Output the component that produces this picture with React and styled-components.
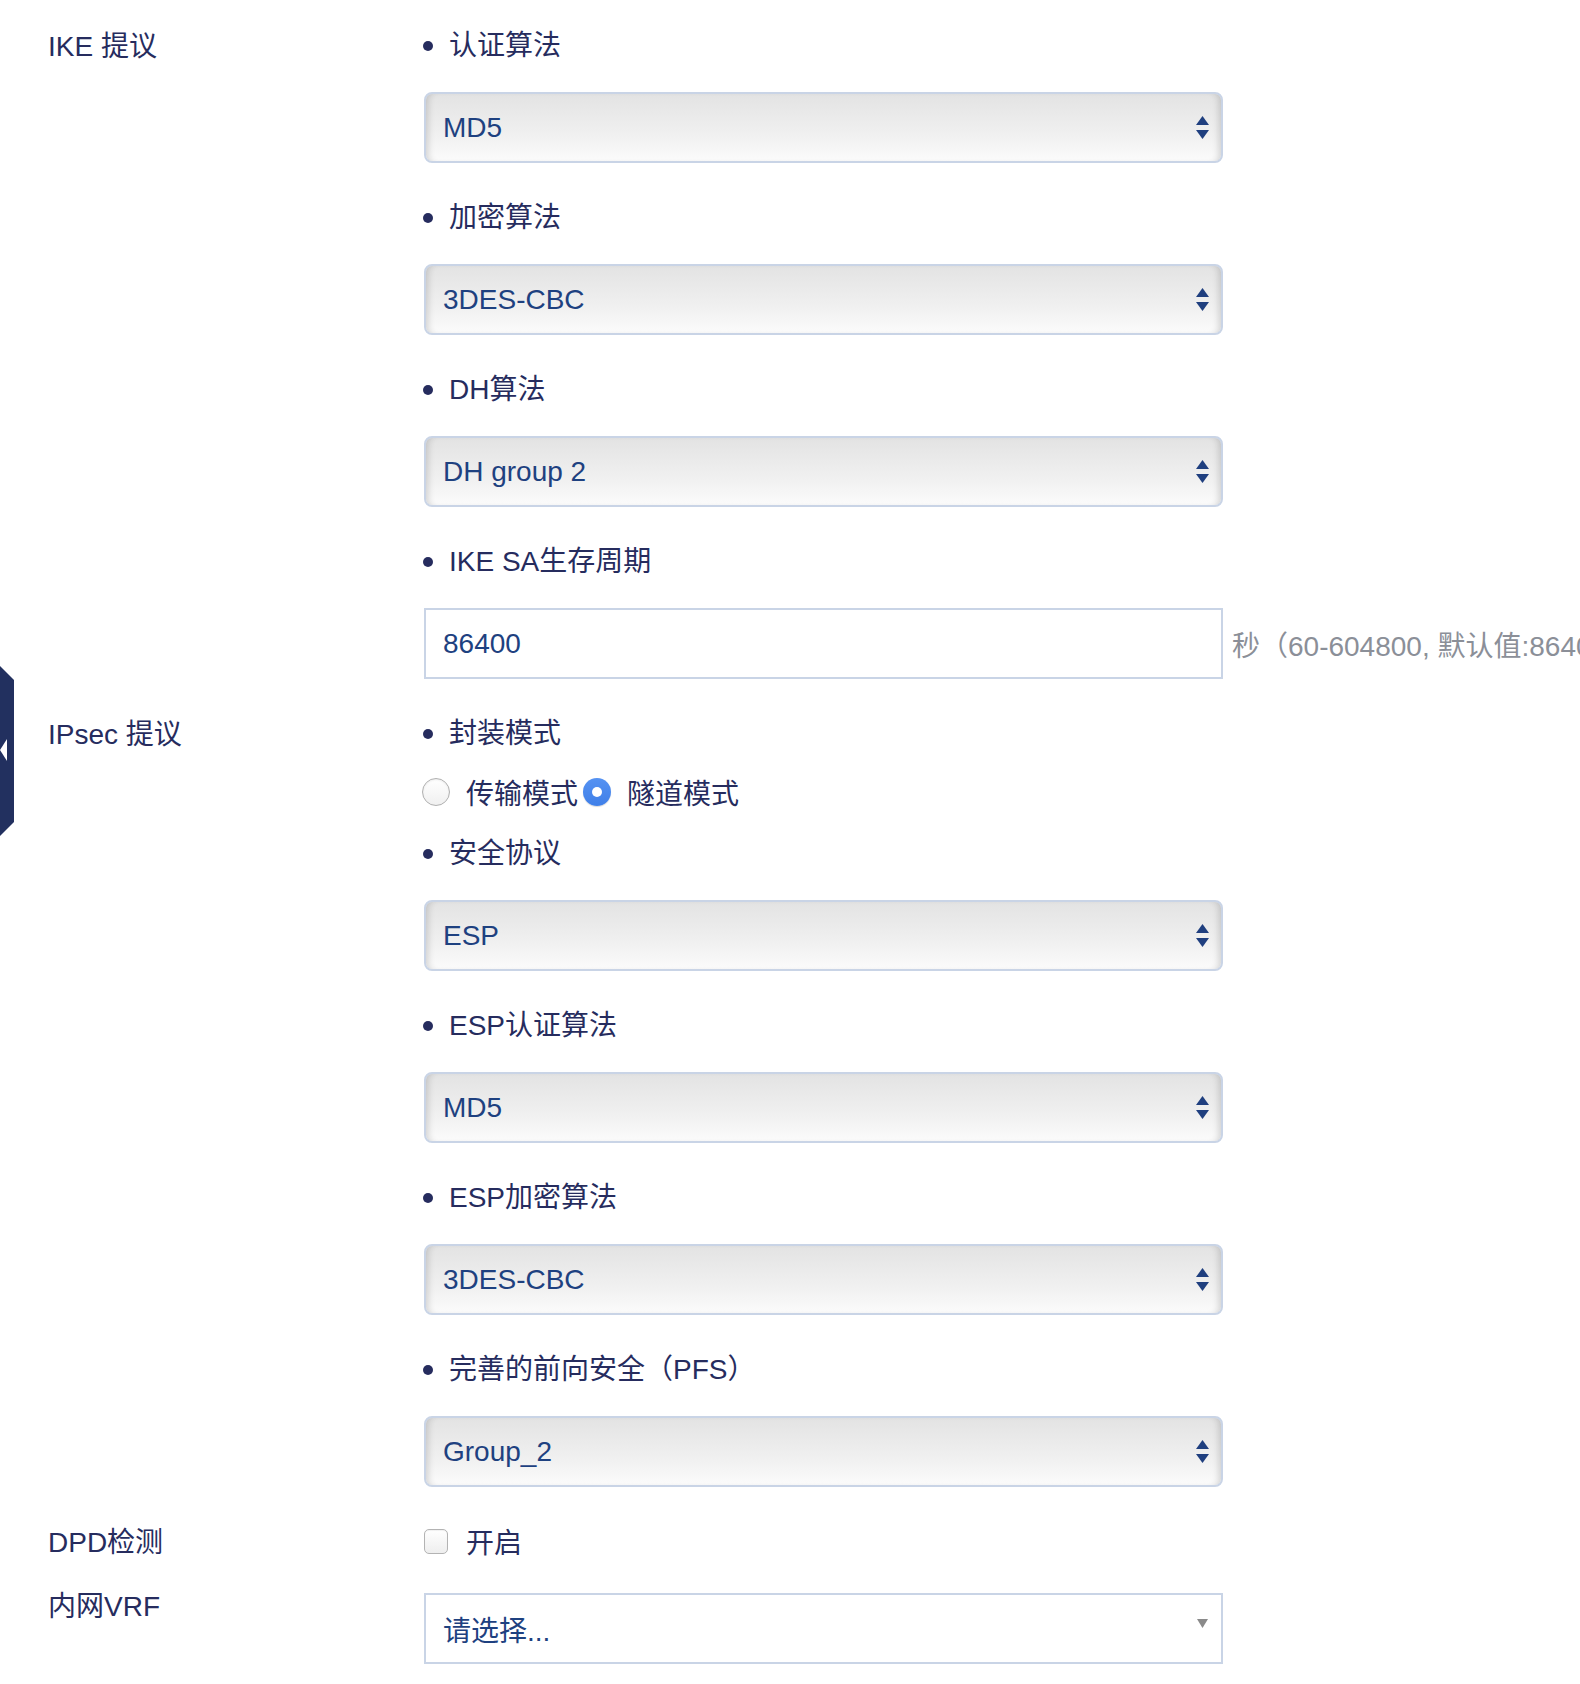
import React from "react";
import styled, { createGlobalStyle } from "styled-components";

const GlobalStyle = createGlobalStyle`
  html, body {
    margin: 0;
    padding: 0;
    background: #ffffff;
    overflow-x: hidden;
  }
  body {
    font-family: "Liberation Sans", "Noto Sans CJK SC", sans-serif;
    font-size: 28px;
    color: #262c5e;
  }
`;

const ikeFields = [
  { label: "认证算法", value: "MD5" },
  { label: "加密算法", value: "3DES-CBC" },
  { label: "DH算法", value: "DH group 2" },
];

const ipsecFields = [
  { label: "安全协议", value: "ESP" },
  { label: "ESP认证算法", value: "MD5" },
  { label: "ESP加密算法", value: "3DES-CBC" },
  { label: "完善的前向安全（PFS）", value: "Group_2" },
];

export default function App() {
  return (
    <>
      <GlobalStyle />
      <SidebarToggle aria-label="收起">
        <svg width="14" height="170" viewBox="0 0 14 170">
          <polygon points="0,0 14,14 14,156 0,170" fill="#22305f" />
          <polygon points="7,73 7,95 0,84" fill="#ffffff" />
        </svg>
      </SidebarToggle>
      <Page>
        <FormRow>
          <RowLabel>IKE 提议</RowLabel>
          <RowContent>
            {ikeFields.map((f) => (
              <Field key={f.label}>
                <SubLabel>{f.label}</SubLabel>
                <SelectBox value={f.value} />
              </Field>
            ))}
            <Field>
              <SubLabel>IKE SA生存周期</SubLabel>
              <InputRow>
                <TextInput defaultValue="86400" />
                <Hint>秒（60-604800, 默认值:86400）</Hint>
              </InputRow>
            </Field>
          </RowContent>
        </FormRow>

        <FormRow>
          <RowLabel>IPsec 提议</RowLabel>
          <RowContent>
            <SubLabel $tight>封装模式</SubLabel>
            <RadioGroup>
              <RadioOption>
                <RadioDot />
                传输模式
              </RadioOption>
              <RadioOption>
                <RadioDot $checked />
                隧道模式
              </RadioOption>
            </RadioGroup>
            {ipsecFields.map((f) => (
              <Field key={f.label}>
                <SubLabel>{f.label}</SubLabel>
                <SelectBox value={f.value} />
              </Field>
            ))}
          </RowContent>
        </FormRow>

        <FormRow>
          <RowLabel>DPD检测</RowLabel>
          <RowContent>
            <CheckOption>
              <CheckBox />
              开启
            </CheckOption>
          </RowContent>
        </FormRow>

        <FormRow $last>
          <RowLabel $compact>内网VRF</RowLabel>
          <RowContent>
            <PlainSelect>
              请选择...
              <svg width="11" height="9" viewBox="0 0 11 9">
                <polygon points="0,0 11,0 5.5,9" fill="#8a8a8a" />
              </svg>
            </PlainSelect>
          </RowContent>
        </FormRow>
      </Page>
    </>
  );
}

function SelectBox({ value }) {
  return (
    <FancySelect>
      <span>{value}</span>
      <svg width="13" height="23" viewBox="0 0 13 23">
        <polygon points="6.5,0 13,9 0,9" fill="#1f3f7f" />
        <polygon points="0,14 13,14 6.5,23" fill="#1f3f7f" />
      </svg>
    </FancySelect>
  );
}

const Page = styled.div`
  padding: 24px 0 20px 48px;
`;

const FormRow = styled.div`
  display: grid;
  grid-template-columns: 376px 799px;
  margin-bottom: ${(p) => (p.$last ? "0" : "33px")};
  &:nth-child(-n + 2) {
    margin-bottom: 0;
  }
`;

const RowLabel = styled.div`
  box-sizing: border-box;
  height: ${(p) => (p.$compact ? "28px" : "40px")};
  line-height: ${(p) => (p.$compact ? "28px" : "40px")};
  padding-top: ${(p) => (p.$compact ? "0" : "3px")};
  color: #262c5e;
  white-space: nowrap;
`;

const RowContent = styled.div`
  display: flex;
  flex-direction: column;
`;

const Field = styled.div`
  display: flex;
  flex-direction: column;
  margin-bottom: 33px;
`;

const SubLabel = styled.div`
  display: flex;
  align-items: center;
  line-height: 40px;
  padding-top: 2px;
  margin-bottom: ${(p) => (p.$tight ? "18px" : "26px")};
  color: #262c5e;
  white-space: nowrap;
  &::before {
    content: "";
    width: 10px;
    height: 10px;
    border-radius: 50%;
    background: #262c5e;
    margin: 0 16px 0 -1px;
    flex-shrink: 0;
  }
`;

const FancySelect = styled.div`
  box-sizing: border-box;
  height: 71px;
  width: 799px;
  display: flex;
  align-items: center;
  justify-content: space-between;
  padding: 0 12px 0 17px;
  border: 2px solid #c9d4e6;
  border-radius: 8px;
  background: linear-gradient(#e3e3e3, #f0f0f0 60%, #fbfbfb);
  box-shadow: inset 7px 0 7px -5px rgba(0, 0, 0, 0.16),
    inset -7px 0 7px -5px rgba(0, 0, 0, 0.16);
  color: #1e4180;
`;

const InputRow = styled.div`
  display: flex;
  align-items: center;
  width: 799px;
`;

const TextInput = styled.input`
  box-sizing: border-box;
  flex-shrink: 0;
  width: 799px;
  height: 71px;
  padding: 0 17px;
  border: 2px solid #c9d4e6;
  border-radius: 0;
  outline: none;
  font: inherit;
  color: #1e4180;
  background: #ffffff;
`;

const Hint = styled.span`
  margin-left: 9px;
  white-space: nowrap;
  color: #8b8f98;
`;

const RadioGroup = styled.div`
  display: flex;
  align-items: center;
  height: 40px;
  margin-bottom: 20px;
`;

const RadioOption = styled.label`
  display: flex;
  align-items: center;
  margin-right: 7px;
  color: #262c5e;
  white-space: nowrap;
`;

const RadioDot = styled.span`
  box-sizing: border-box;
  width: 28px;
  height: 28px;
  border-radius: 50%;
  margin: 0 16px 0 -2px;
  display: flex;
  align-items: center;
  justify-content: center;
  border: ${(p) => (p.$checked ? "none" : "1px solid #b0b0b0")};
  background: ${(p) =>
    p.$checked ? "linear-gradient(#5592f2, #3f7fe8)" : "linear-gradient(#ffffff, #f0f0f0)"};
  box-shadow: ${(p) =>
    p.$checked ? "0 1px 1px rgba(0,0,0,0.15)" : "inset 0 1px 2px rgba(0,0,0,0.08)"};
  &::after {
    content: "";
    display: ${(p) => (p.$checked ? "block" : "none")};
    width: 10px;
    height: 10px;
    border-radius: 50%;
    background: #ffffff;
  }
`;

const CheckOption = styled.label`
  box-sizing: border-box;
  display: flex;
  align-items: center;
  height: 40px;
  padding-top: 2px;
  color: #262c5e;
`;

const CheckBox = styled.span`
  box-sizing: border-box;
  width: 24px;
  height: 25px;
  border: 1px solid #b3b3b3;
  border-radius: 5px;
  background: linear-gradient(#ffffff, #eeeeee);
  box-shadow: inset 0 1px 1px rgba(0, 0, 0, 0.06);
  margin-right: 18px;
`;

const PlainSelect = styled.div`
  box-sizing: border-box;
  width: 799px;
  height: 71px;
  display: flex;
  align-items: center;
  justify-content: space-between;
  padding: 0 13px 0 17px;
  border: 2px solid #c9d4e6;
  background: #ffffff;
  color: #1e4180;
  svg {
    align-self: flex-start;
    margin-top: 24px;
  }
`;

const SidebarToggle = styled.div`
  position: absolute;
  left: 0;
  top: 666px;
  width: 14px;
  height: 170px;
  svg {
    display: block;
  }
`;
